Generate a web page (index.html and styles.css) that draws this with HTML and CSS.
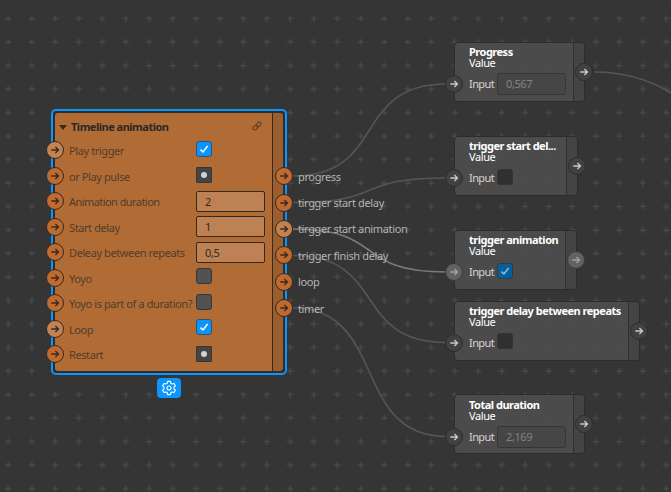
FILE: index.html
```html
<!DOCTYPE html>
<html lang="en">
<head>
<meta charset="utf-8">
<title>Node editor</title>
<link rel="stylesheet" href="styles.css">
</head>
<body>
<svg class="layer" width="671" height="492">
  <defs>
    <pattern id="grid" x="-3.5" y="6.75" width="47" height="47" patternUnits="userSpaceOnUse">
      <path d="M8.5 11.75h6.500M11.75 8.500v6.500M32 11.75h6.500M35.25 8.500v6.500M8.500 35.25h6.500M11.75 32v6.500M32 35.25h6.500M35.25 32v6.500" stroke="#4f4f4f" stroke-width="1"/>
    </pattern>
    <symbol id="arrow" viewBox="0 0 10 10"><path d="M1.3 5h7M5.4 1.9 8.5 5 5.4 8.1" fill="none" stroke="currentColor" stroke-width="1.4"/></symbol>
    <symbol id="check" viewBox="0 0 10 10"><path d="M1.5 5.6 4 8 8.6 2" fill="none" stroke="currentColor" stroke-width="1.5"/></symbol>
  </defs>
  <rect width="671" height="492" fill="url(#grid)"/>
</svg>

<section class="timeline">
  <div class="main">
    <header><i class="caret"></i><b>Timeline animation</b>
      <svg class="link" viewBox="0 0 10 10"><g transform="rotate(-45 5 5)" fill="none" stroke="currentColor" stroke-width="1.4"><rect x=".2" y="3.3" width="5.4" height="3.4" rx="1.7"/><rect x="4.4" y="3.3" width="5.4" height="3.4" rx="1.7"/></g></svg>
    </header>
    <div class="row"><span class="port lit"><svg><use href="#arrow"/></svg></span><label>Play trigger</label><span class="box on"><svg><use href="#check"/></svg></span></div>
    <div class="row"><span class="port"><svg><use href="#arrow"/></svg></span><label>or Play pulse</label><span class="box pulse"><i></i></span></div>
    <div class="row"><span class="port"><svg><use href="#arrow"/></svg></span><label>Animation duration</label><span class="field">2</span></div>
    <div class="row"><span class="port"><svg><use href="#arrow"/></svg></span><label>Start delay</label><span class="field">1</span></div>
    <div class="row"><span class="port"><svg><use href="#arrow"/></svg></span><label>Deleay between repeats</label><span class="field">0,5</span></div>
    <div class="row"><span class="port"><svg><use href="#arrow"/></svg></span><label>Yoyo</label><span class="box"></span></div>
    <div class="row"><span class="port"><svg><use href="#arrow"/></svg></span><label>Yoyo is part of a duration?</label><span class="box"></span></div>
    <div class="row"><span class="port lit"><svg><use href="#arrow"/></svg></span><label>Loop</label><span class="box on"><svg><use href="#check"/></svg></span></div>
    <div class="row"><span class="port"><svg><use href="#arrow"/></svg></span><label>Restart</label><span class="box pulse"><i></i></span></div>
  </div>
  <div class="strip"></div>
</section>

<svg class="layer wires" width="671" height="492">
  <path d="M293 176C387 176 352 84 446 84"/>
  <path d="M293 202.5C387 202.5 352 178 446 178"/>
  <path class="active" d="M293 229C387 229 352 272 446 272"/>
  <path d="M293 255.5C387 255.5 352 342.5 446 342.5"/>
  <path d="M293 308C387 308 352 436.5 446 436.5"/>
  <path d="M594 72C622 72 649 79 673 94"/>
</svg>

<div class="outputs">
  <div><span class="port"><svg><use href="#arrow"/></svg></span><label>progress</label></div>
  <div><span class="port"><svg><use href="#arrow"/></svg></span><label>tirgger start delay</label></div>
  <div><span class="port lit"><svg><use href="#arrow"/></svg></span><label>tirgger start animation</label></div>
  <div><span class="port"><svg><use href="#arrow"/></svg></span><label>trigger finish delay</label></div>
  <div><span class="port"><svg><use href="#arrow"/></svg></span><label>loop</label></div>
  <div><span class="port"><svg><use href="#arrow"/></svg></span><label>timer</label></div>
</div>

<button class="gear"><svg viewBox="0 0 16 16" fill="none" stroke="#fff" stroke-width="1.1" stroke-linejoin="round"><path d="M6.6 1.4h2.8l.4 1.9 1.3.75 1.9-.6 1.4 2.4-1.45 1.35v1.6l1.45 1.35-1.4 2.4-1.9-.6-1.3.75-.4 1.9H6.6l-.4-1.9-1.3-.75-1.9.6-1.4-2.4 1.45-1.35v-1.6L1.6 5.85 3 3.45l1.9.6 1.3-.75z"/><circle cx="8" cy="8" r="2"/></svg></button>

<section class="value n1"><div class="body"><b>Progress</b><span>Value</span><div class="input"><span class="port"><svg><use href="#arrow"/></svg></span><label>Input</label><span class="field">0,567</span></div></div><div class="strip"><span class="port"><svg><use href="#arrow"/></svg></span></div></section>
<section class="value n2"><div class="body"><b>trigger start del...</b><span>Value</span><div class="input"><span class="port"><svg><use href="#arrow"/></svg></span><label>Input</label><span class="box"></span></div></div><div class="strip"><span class="port"><svg><use href="#arrow"/></svg></span></div></section>
<section class="value n3"><div class="body"><b>trigger animation</b><span>Value</span><div class="input"><span class="port lit"><svg><use href="#arrow"/></svg></span><label>Input</label><span class="box on"><svg><use href="#check"/></svg></span></div></div><div class="strip"><span class="port lit"><svg><use href="#arrow"/></svg></span></div></section>
<section class="value n4"><div class="body"><b>trigger delay between repeats</b><span>Value</span><div class="input"><span class="port"><svg><use href="#arrow"/></svg></span><label>Input</label><span class="box"></span></div></div><div class="strip"><span class="port"><svg><use href="#arrow"/></svg></span></div></section>
<section class="value n5"><div class="body"><b>Total duration</b><span>Value</span><div class="input"><span class="port"><svg><use href="#arrow"/></svg></span><label>Input</label><span class="field">2,169</span></div></div><div class="strip"><span class="port"><svg><use href="#arrow"/></svg></span></div></section>
</body>
</html>
```
FILE: styles.css
```css
* { box-sizing: border-box; }
body {
  margin: 0;
  width: 671px;
  height: 492px;
  position: relative;
  overflow: hidden;
  background: #353535;
  font: 11px/14px "Noto Sans", sans-serif;
  letter-spacing: -.4px;
}
b { letter-spacing: -.5px; }
.layer { position: absolute; left: 0; top: 0; pointer-events: none; }
.wires path { fill: none; stroke: #565656; stroke-width: 1.6; }
.wires .active { stroke: #7b7b7b; }

.port {
  display: flex;
  flex: none;
  align-items: center;
  justify-content: center;
  width: 18px;
  height: 18px;
  border: 1px solid #2b2b2b;
  border-radius: 50%;
  background: #c06a2d;
  color: #352c26;
}
.port.lit { background: #c5824f; }
.port svg { width: 10px; height: 10px; }

.box {
  display: flex;
  flex: none;
  align-items: center;
  justify-content: center;
  width: 16px;
  height: 16px;
  border: 1px solid #383431;
  border-radius: 3px;
  background: #515151;
  color: #fff;
}
.box.on { background: #0a95ff; border-color: #35506a; }
.box svg { width: 10px; height: 10px; }
.pulse { border-radius: 1px; background: #444; }
.pulse i { width: 6px; height: 6px; border-radius: 50%; background: #d2d2d2; }

.timeline {
  position: absolute;
  left: 51px;
  top: 109px;
  width: 236px;
  height: 266px;
  display: flex;
  border: 2px solid #0a95ff;
  border-radius: 5px;
  background: #2d2d2d;
  padding: 2px;
}
.main {
  flex: 1;
  background: #b16c35;
  border-radius: 3px 0 0 3px;
}
.timeline > .strip {
  width: 11px;
  border-left: 1px solid #33291f;
  border-radius: 0 3px 3px 0;
  background: #9c5d2f;
}
.timeline header {
  display: flex;
  align-items: center;
  height: 25px;
  padding: 3px 10px 0 4px;
  color: #2c2825;
}
.caret { border: 4px solid transparent; border-top: 5px solid #35291f; border-bottom: 0; margin-right: 4px; }
.link { width: 10px; height: 10px; margin-left: auto; margin-top: -3px; color: #6b482c; }
.row { display: flex; align-items: center; height: 25.5px; color: #513c2c; }
.row .port { margin: -1px 0 0 -9px; }
.row label { width: 127px; margin-left: 5px; white-space: nowrap; padding-top: 1px; }
.row:nth-child(4) label { letter-spacing: -.56px; }
.row .box { margin-top: -4px; }
.row .pulse { margin-top: -2px; }
.row .field {
  width: 69px;
  height: 21px;
  margin-top: -1px;
  padding: 3px 8px;
  border: 1px solid #33291f;
  border-radius: 2px;
  background: #be8153;
  color: #33291f;
}

.outputs { position: absolute; left: 275px; top: 163px; letter-spacing: -.36px; }
.outputs > div { display: flex; align-items: center; height: 26.4px; color: #b4b4b4; }
.outputs label { margin-left: 5px; padding-top: 1px; white-space: nowrap; }

.gear {
  position: absolute;
  left: 157px;
  top: 378px;
  width: 24px;
  height: 20px;
  padding: 0;
  display: flex;
  align-items: center;
  justify-content: center;
  border: 0;
  border-radius: 4px;
  background: #0a95ff;
}
.gear svg { width: 16px; height: 16px; }

.value {
  position: absolute;
  left: 453.5px;
  height: 60px;
  display: flex;
  border: 1px solid #2c2c2c;
  border-radius: 4px;
  background: rgba(78, 78, 78, .9);
  color: #fff;
}
.value .body { flex: 1; min-width: 0; display: flex; flex-direction: column; padding: 2.4px 0 0 14.5px; line-height: 10px; white-space: nowrap; }
.value b { line-height: 13px; }
.value .strip { flex: none; width: 11px; border-left: 1px solid #303030; background: rgba(66, 66, 66, .8); border-radius: 0 3px 3px 0; }
.value .strip .port { margin: 20px 0 0 1.4px; }
.value .port { background: #414141; border-color: #2c2c2c; color: #c8c8c8; }
.value .port.lit { background: #626262; color: #a0a0a0; }
.value .lit { border-color: #3b3b3b; }
.input { display: flex; align-items: center; height: 22px; margin: 5px 0 0 -24px; color: #d5d5d5; }
.input label { width: 28px; margin-left: 6px; letter-spacing: -.6px; }
.input .field { width: 69px; height: 22px; padding: 5px 8px; border: 1px solid #353535; border-radius: 3px; background: #464646; color: #828282; }
.value .box { background: #303030; border-color: #343434; margin-top: -3px; }
.value .box.on { background: #055f9f; border-color: #303a42; color: #a0b8ca; }
.n1 { top: 41.5px; width: 131px; }
.n2 { top: 135.7px; width: 124.5px; }
.n3 { top: 229.7px; width: 123.5px; }
.n4 { top: 300.5px; width: 186px; }
.n5 { top: 394.4px; width: 131px; }
```
